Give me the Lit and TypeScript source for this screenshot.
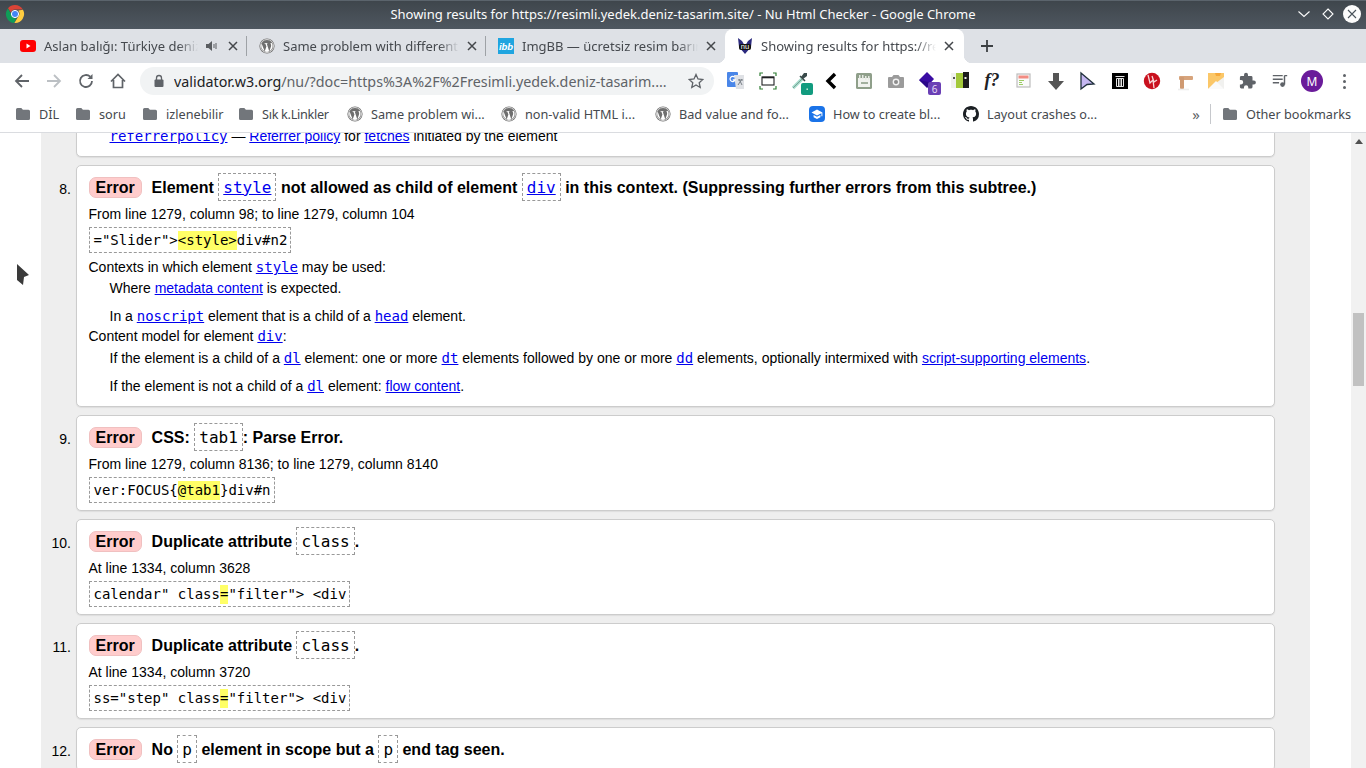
import { LitElement, html, css, svg } from 'lit';
import { customElement } from 'lit/decorators.js';

const folder = html`<svg class="ico" viewBox="0 0 16 16"><path fill="#72767b" d="M1 3.5A1.5 1.5 0 0 1 2.5 2h3.8l1.6 1.8h5.6A1.5 1.5 0 0 1 15 5.3v7.2a1.5 1.5 0 0 1-1.5 1.5h-11A1.5 1.5 0 0 1 1 12.5z"/></svg>`;

const wp = html`<svg class="ico" viewBox="0 0 16 16"><circle cx="8" cy="8" r="7.6" fill="#6f6f6f"/><circle cx="8" cy="8" r="6.5" fill="none" stroke="#fff" stroke-width=".7"/><path fill="#fff" d="M2.6 5.6 5.7 13.6 7.4 8.6 6.3 5.6H5.4V4.9H8.6V5.6H7.7L10.3 13.4 12 8.4C12.4 7 12 6 11.3 5.2L12.8 5A6 6 0 0 1 13.6 8 5.8 5.8 0 0 1 8 13.9 6 6 0 0 1 2.2 8C2.2 7.1 2.3 6.4 2.6 5.6Z"/></svg>`;

const github = html`<svg class="ico" viewBox="0 0 16 16"><path fill="#1b1f23" d="M8 0C3.58 0 0 3.58 0 8c0 3.54 2.29 6.53 5.47 7.59.4.07.55-.17.55-.38 0-.19-.01-.82-.01-1.49-2.01.37-2.53-.49-2.69-.94-.09-.23-.48-.94-.82-1.13-.28-.15-.68-.52-.01-.53.63-.01 1.08.58 1.23.82.72 1.21 1.87.87 2.33.66.07-.52.28-.87.51-1.07-1.78-.2-3.64-.89-3.64-3.95 0-.87.31-1.59.82-2.15-.08-.2-.36-1.02.08-2.12 0 0 .67-.21 2.2.82.64-.18 1.32-.27 2-.27s1.36.09 2 .27c1.53-1.04 2.2-.82 2.2-.82.44 1.1.16 1.92.08 2.12.51.56.82 1.27.82 2.15 0 3.07-1.87 3.75-3.65 3.95.29.25.54.73.54 1.48 0 1.07-.01 1.93-.01 2.2 0 .21.15.46.55.38A8.01 8.01 0 0 0 16 8c0-4.42-3.58-8-8-8z"/></svg>`;

const cap = html`<svg class="ico" viewBox="0 0 16 16"><rect width="16" height="16" rx="4" fill="#1a73e8"/><path fill="#fff" d="M8 3.6 2.5 6.6 8 9.6l4.4-2.4v3h1V6.6zM4.6 9v2.2L8 13l3.4-1.8V9L8 10.8z"/></svg>`;

const closeX = html`<svg class="x" viewBox="0 0 10 10"><path d="M1 1l8 8M9 1l-8 8" stroke="#44474b" stroke-width="1.5" fill="none"/></svg>`;

// toolbar extension icons, left to right
const ext = [
  svg`<rect x="1" y="1" width="11" height="15" rx="1" fill="#4a86e8"/><path d="M8 4h10v14H10z" fill="#dfe1e5"/><path d="M13 8l3 6M16 8l-4 6M12 9h5" stroke="#7a8087" stroke-width="1" fill="none"/><path d="M8.6 6.2a2.6 2.6 0 1 0 .5 2.6H6.7" stroke="#fff" stroke-width="1.2" fill="none"/>`,
  svg`<path d="M2 5V2h3M15 2h3v3M2 15v3h3M18 15v3h-3" stroke="#2e7d32" stroke-width="1.2" fill="none"/><rect x="4" y="6" width="12" height="8" fill="none" stroke="#202124" stroke-width="1.1"/><path d="M4 6.500h12" stroke="#202124" stroke-width="1.600"/>`,
  svg`<path d="M3 17 12 8" stroke="#a5dccb" stroke-width="3.200"/><path d="M3 17 12 8" stroke="#6f8f88" stroke-width=".8"/><path d="M11 6l3-4h3v3l-4 3z" fill="#394a4a"/><path d="M10 5l5 5" stroke="#394a4a" stroke-width="1.600"/><rect x="11" y="12" width="12" height="12" rx="2" fill="#129b7f"/><rect x="16.500" y="17.500" width="1.400" height="1.400" fill="#e8f5e9"/>`,
  svg`<path d="M13 3 6 10l7 7" fill="none" stroke="#000" stroke-width="3.4"/>`,
  svg`<rect x="2" y="2" width="16" height="16" rx="1.5" fill="#8f9f8a"/><rect x="4" y="7" width="12" height="9" fill="#f0f2ee"/><path d="M5 4h1.5v4H5zM8 4h1.5v4H8zM11 5h1.5v4H11zM14 5h1.5v4H14z" fill="#e6e9e3"/><path d="M7 12h7" stroke="#8f9f8a" stroke-width="1.6"/>`,
  svg`<path d="M3 6h3l1.5-2h5L14 6h3a1 1 0 0 1 1 1v9a1 1 0 0 1-1 1H3a1 1 0 0 1-1-1V7a1 1 0 0 1 1-1z" fill="#9b9b9b"/><circle cx="10" cy="11" r="3.4" fill="#f2f2f2"/><circle cx="10" cy="11" r="2" fill="#8c8c8c"/>`,
  svg`<path d="M1 9 9 1l7 7-7 8z" fill="#3a0ca3"/><path d="M1 9l8 8 6-5" fill="#2b078a"/><rect x="10" y="11" width="13" height="13" rx="2" fill="#6a3fb5"/><text x="16.5" y="21.5" text-anchor="middle" font-family="Noto Sans" font-size="10" fill="#e6dcf5">6</text>`,
  svg`<rect x="1" y="2" width="5" height="15" fill="#f1f1ee"/><rect x="6" y="2" width="9" height="15" fill="#a3c93a"/><rect x="13" y="1" width="6" height="16" fill="#1c1c1c"/><rect x="3" y="6" width="2" height="2" fill="#555"/><rect x="14.5" y="6" width="2" height="2" fill="#eee"/>`,
  svg`<text x="10" y="15" text-anchor="middle" font-family="Liberation Serif" font-style="italic" font-weight="700" font-size="18" fill="#202124">f?</text>`,
  svg`<rect x="3" y="3" width="13" height="13" fill="#fafafa" stroke="#bdbdbd" stroke-width="1.2"/><rect x="4.500" y="4.500" width="10" height="3" fill="#f28b82"/><path d="M5 9.500h5M5 11.500h3M5 13.500h4" stroke="#9ccc65" stroke-width="1.200"/>`,
  svg`<path d="M7 2h6v8h5l-8 9-8-9h5z" fill="#555"/>`,
  svg`<path d="M3 2 16 13 9 13.500 3 18z" fill="#c5b7f1" stroke="#20303c" stroke-width="1.300" stroke-linejoin="miter"/>`,
  svg`<rect x="2" y="2" width="16" height="16" fill="#000"/><path d="M5.500 5.500h9M6.500 7.500h7v8h-7zM8.500 8v7M10 8v7M11.500 8v7" fill="none" stroke="#e6e6e6" stroke-width="1"/>`,
  svg`<circle cx="10" cy="10" r="8.2" fill="#c9111e"/><path d="M6 4l2 8 3-3 1 8M10 5l2 6 3-2" fill="none" stroke="#f7d7d9" stroke-width="1.3"/>`,
  svg`<rect x="5" y="5" width="14" height="4" rx="1" fill="#d7a47c"/><rect x="6" y="6" width="4" height="12" rx="1" fill="#cf9a72"/><path d="M4 18.500h11" stroke="#eee" stroke-width="1.600"/>`,
  svg`<rect x="2" y="2" width="16" height="16" fill="#fbc768"/><path d="M2 18 18 6v12z" fill="#f1f1ef"/><path d="M2 18 10 10 18 18z" fill="#fafafa"/><path d="M9 2l1 3h4l1-3" fill="#f6a93b"/>`,
];

const puzzle = html`<svg class="tb" viewBox="0 0 20 20"><path fill="#5f6368" d="M16.5 9.5H15V6a1.5 1.5 0 0 0-1.5-1.5H10V3a2.2 2.2 0 0 0-4.4 0v1.5H2.5A1.5 1.5 0 0 0 1 6v3h1.3a2.4 2.4 0 0 1 0 4.8H1v3A1.5 1.5 0 0 0 2.5 18.3h3V17a2.4 2.4 0 0 1 4.8 0v1.3h3.2a1.5 1.5 0 0 0 1.5-1.5V14h1.5a2.2 2.2 0 0 0 0-4.5z"/></svg>`;
const media = html`<svg class="tb" viewBox="0 0 20 20"><path d="M2 4h11M2 8h11M2 12h7" stroke="#5f6368" stroke-width="1.6" fill="none"/><path d="M15 4h3M15 4v10" stroke="#5f6368" stroke-width="1.6" fill="none"/><circle cx="12.8" cy="14" r="2.6" fill="#5f6368"/></svg>`;

@customElement('app-root')
export class AppRoot extends LitElement {
  static styles = css`
    :host {
      display: block;
      width: 1366px;
      height: 768px;
      overflow: hidden;
      position: relative;
      font-family: 'Noto Sans', sans-serif;
      background: #fff;
    }
    .win { display: flex; flex-direction: column; height: 768px; }

    /* title bar */
    .titlebar {
      height: 29px;
      flex: none;
      display: grid;
      grid-template-columns: 1fr auto 1fr;
      align-items: center;
      background: linear-gradient(#3f464c, #4e5760);
      border-top: 1px solid #5b646c;
      box-sizing: border-box;
      color: #fcfcfc;
      font-size: 13px;
      padding: 0 5px 2px;
    }
    .winbtns { display: flex; justify-content: flex-end; align-items: center; gap: 6px; }
    .winbtns svg { width: 18px; height: 18px; display: block; }

    /* tabs */
    .tabstrip {
      height: 34px;
      flex: none;
      display: flex;
      background: #dee1e6;
      padding-left: 8px;
      font-size: 13px;
      color: #45494e;
    }
    .tab {
      width: 239px;
      flex: none;
      box-sizing: border-box;
      display: flex;
      align-items: center;
      padding: 0 9px 0 12px;
      gap: 8px;
      position: relative;
    }
    .tab::after {
      content: '';
      position: absolute;
      right: 0;
      top: 7px;
      height: 20px;
      width: 1px;
      background: #9ea2a6;
    }
    .tab.nosep::after { display: none; }
    .tab.active {
      background: #fff;
      border-radius: 8px 8px 0 0;
      padding-right: 10px;
    }
    .tab.active::after {
      display: block;
      right: -8px;
      top: auto;
      bottom: 0;
      width: 8px;
      height: 8px;
      background: radial-gradient(circle at 100% 0, transparent 8px, #fff 8.5px);
    }
    .tab.active::before {
      content: '';
      position: absolute;
      left: -8px;
      bottom: 0;
      width: 8px;
      height: 8px;
      background: radial-gradient(circle at 0 0, transparent 8px, #fff 8.5px);
    }
    .tab .fav { width: 16px; height: 16px; flex: none; display: block; }
    .tab .label {
      flex: 1;
      white-space: nowrap;
      overflow: hidden;
      -webkit-mask-image: linear-gradient(90deg, #000 calc(100% - 20px), transparent);
      mask-image: linear-gradient(90deg, #000 calc(100% - 20px), transparent);
    }
    .x { width: 10px; height: 10px; flex: none; }
    .spk { width: 12px; height: 12px; flex: none; margin-right: 2px; }
    .plus { width: 44px; margin-left: 1px; display: flex; align-items: center; justify-content: center; }
    .plus svg { width: 14px; height: 14px; }

    /* toolbar */
    .toolbar {
      height: 36px;
      flex: none;
      display: flex;
      align-items: center;
      padding-left: 6px;
      box-sizing: border-box;
    }
    .nav { width: 32px; display: flex; justify-content: center; }
    .nav svg { width: 18px; height: 18px; display: block; }
    .omni {
      width: 574px;
      height: 28px;
      margin-left: 6px;
      margin-right: 6px;
      flex: none;
      box-sizing: border-box;
      border-radius: 14px;
      background: #f1f3f4;
      display: flex;
      align-items: center;
      padding: 0 10px 0 13px;
      font-size: 14.3px;
      color: #5f6368;
      white-space: nowrap;
    }
    .omni .host { color: #202124; }
    .omni .url { flex: 1; margin-left: 9px; overflow: hidden; }
    .omni svg { flex: none; display: block; }
    .slot { width: 32px; flex: none; display: flex; justify-content: center; align-items: center; }
    .slot svg.e { width: 20px; height: 20px; overflow: visible; display: block; }
    .tb { width: 18px; height: 18px; display: block; }
    .avatar {
      width: 22px;
      height: 22px;
      border-radius: 50%;
      background: #6a1b9a;
      color: #fff;
      font-size: 12px;
      display: flex;
      align-items: center;
      justify-content: center;
    }
    .dots { display: flex; flex-direction: column; gap: 3px; }
    .dots i { width: 3px; height: 3px; border-radius: 50%; background: #5f6368; display: block; }

    /* bookmarks */
    .bookmarks {
      height: 34px;
      flex: none;
      box-sizing: border-box;
      border-bottom: 1px solid #dadce0;
      display: flex;
      align-items: center;
      padding: 0 15px 3px 15px;
      font-size: 12.7px;
      color: #45494e;
    }
    .bm { display: flex; align-items: center; gap: 8px; white-space: nowrap; flex: none; }
    .bm.site { width: 154px; }
    .tight { letter-spacing: -0.3px; }
    .ico { width: 16px; height: 16px; flex: none; display: block; }
    .spacer { flex: 1; }
    .more { color: #5f6368; font-size: 15px; margin-right: 10px; }
    .bsep { width: 1px; height: 20px; background: #c6c8cc; margin-right: 11px; }

    /* page */
    .page { flex: 1; min-height: 0; display: flex; overflow: hidden; }
    .col {
      flex: 1;
      margin: 0 41px;
      background: #eee;
      padding-right: 35px;
      font: 14px/20px 'Liberation Sans', Arial, sans-serif;
      color: #000;
    }
    .scrollbar { width: 15px; flex: none; background: #f1f1f1; position: relative; }
    .arrow {
      position: absolute; left: 4px; top: 6px;
      width: 0; height: 0;
      border-left: 4px solid transparent;
      border-right: 4px solid transparent;
      border-bottom: 5px solid #505050;
    }
    .thumb { position: absolute; left: 2px; top: 180px; width: 11px; height: 73px; background: #c1c1c1; }

    .item { display: flex; margin-bottom: 8px; }
    .item.first { margin-top: -8px; }
    .num { width: 30px; flex: none; text-align: right; padding-top: 14px; color: #000; }
    .card {
      flex: 1;
      margin-left: 5px;
      box-sizing: border-box;
      background: #fff;
      border: 1px solid #ccc;
      border-radius: 5px;
      box-shadow: 0 1px 1px #ddd;
      padding: 7px 12px 7px 11.5px;
    }
    .first .card { padding: 0 12px 10px 11.5px; }
    .head {
      font-size: 16px;
      font-weight: 700;
      line-height: 30px;
      white-space: nowrap;
      height: 28px;
    }
    .pill {
      display: inline-block;
      background: #fcc;
      border: 1px solid #f0c0c0;
      border-radius: 7px;
      padding: 0 6px;
      line-height: 19px;
      margin-right: 5.5px;
    }
    .head code {
      font: 400 16px/27px 'DejaVu Sans Mono', monospace;
      height: 26px;
      display: inline-block;
      border: 1px dashed #999;
      padding: 0 4px;
      vertical-align: top;
    }
    a { color: #00e; text-decoration: underline; }
    code { font-family: 'DejaVu Sans Mono', monospace; line-height: 0; }
    .loc { margin-top: 3px; }
    .ext {
      display: table;
      margin-top: 3px;
      border: 1px dashed #999;
      padding: 0 3px 0 4px;
      font: 14px/24px 'DejaVu Sans Mono', monospace;
      white-space: pre;
    }
    .ext b { font-weight: 400; background: #ff6; display: inline-block; line-height: 19px; }
    dl { margin: 4px 0 3px; }
    dd { margin: 1px 0 0 21px; }
    dd + dd { margin-top: 8px; }
    dd.tall { margin-top: 2px; }
    dt code, dd code { font-size: 14px; }
    .cursor { position: absolute; left: 17px; top: 264px; width: 12px; height: 21px; }
  `;

  private tab(fav: unknown, label: string, extra: unknown = '', cls = '') {
    return html`<div class="tab ${cls}">${fav}<span class="label">${label}</span>${extra}${closeX}</div>`;
  }

  private errorItem(n: number, head: unknown, loc?: string, ext?: unknown, more: unknown = '') {
    return html`<div class="item">
      <div class="num">${n}.</div>
      <div class="card">
        <div class="head"><span class="pill">Error</span> ${head}</div>
        ${loc ? html`<div class="loc">${loc}</div><div class="ext">${ext}</div>` : ''}
        ${more}
      </div>
    </div>`;
  }

  render() {
    const yt = html`<svg class="fav" viewBox="0 0 16 16"><rect y="2" width="16" height="12" rx="3" fill="#f00"/><path d="M6.5 5.5v5l4-2.5z" fill="#fff"/></svg>`;
    const ibb = html`<svg class="fav" viewBox="0 0 16 16"><rect width="16" height="16" fill="#1fa5e0"/><text x="8" y="11.5" text-anchor="middle" font-family="Liberation Sans" font-style="italic" font-weight="700" font-size="9.5" fill="#fff">ibb</text></svg>`;
    const nu = html`<svg class="fav" viewBox="0 0 16 16"><path d="M1 0 5 3 8 8 11 3 15 0 14 9 8 16 2 9z" fill="#2c2a7e"/><rect x="2" y="6" width="12" height="6" rx="2" fill="#111"/><text x="8" y="11" text-anchor="middle" font-family="Liberation Sans" font-size="7.500" fill="#fff">nu</text></svg>`;
    const spk = html`<svg class="spk" viewBox="0 0 12 12"><path d="M0 4h2.5L6 1v10L2.5 8H0z" fill="#5a5d61"/><path d="M8 4v4M10 3v6" stroke="#5a5d61" stroke-width="1"/></svg>`;
    // folder bookmark slot widths, measured from the bar
    const folders: [string, number, string?][] = [
      ['DİL', 60],
      ['soru', 67],
      ['izlenebilir', 96],
      ['Sık k.Linkler', 109, 'tight'],
    ];

    return html`
      <div class="win">
        <div class="titlebar">
          <svg width="20" height="20" viewBox="0 0 20 20">
            <path d="M10 1a9 9 0 0 1 7.8 4.5H10a4.5 4.5 0 0 0-4.2 3L3 4.2A9 9 0 0 1 10 1z" fill="#db4437"/>
            <path d="M2.9 4.4 7 11.6a4.5 4.5 0 0 0 4.5 2.8L9 19A9 9 0 0 1 2.9 4.4z" fill="#0f9d58"/>
            <path d="M18 5.8A9 9 0 0 1 9.4 19l4.2-7a4.5 4.5 0 0 0-.3-5.5z" fill="#ffcd40"/>
            <circle cx="10" cy="10" r="3.6" fill="#4285f4" stroke="#fff" stroke-width="1"/>
          </svg>
          <span>Showing results for https://resimli.yedek.deniz-tasarim.site/ - Nu Html Checker - Google Chrome</span>
          <div class="winbtns">
            <svg viewBox="0 0 18 18"><path d="M3.5 6.5 9 11.5l5.500-5" stroke="#fcfcfc" stroke-width="1.1" fill="none"/></svg>
            <svg viewBox="0 0 18 18"><path d="M9 4l5 5-5 5-5-5z" stroke="#fcfcfc" stroke-width="1.1" fill="none"/></svg>
            <svg viewBox="0 0 18 18"><circle cx="9" cy="9" r="9" fill="#fcfcfc"/><path d="M5 5l8 8M13 5l-8 8" stroke="#4a535b" stroke-width="1.1"/></svg>
          </div>
        </div>

        <div class="tabstrip">
          ${this.tab(yt, 'Aslan balığı: Türkiye deniz', spk)}
          ${this.tab(html`<span class="fav">${wp}</span>`, 'Same problem with different')}
          ${this.tab(ibb, 'ImgBB — ücretsiz resim barın', '', 'nosep')}
          ${this.tab(nu, 'Showing results for https://re', '', 'active')}
          <div class="plus"><svg viewBox="0 0 14 14"><path d="M7 1v12M1 7h12" stroke="#3c4043" stroke-width="1.8"/></svg></div>
        </div>

        <div class="toolbar">
          <div class="nav"><svg viewBox="0 0 18 18"><path d="M16 9H3M9 3 3 9l6 6" stroke="#5f6368" stroke-width="1.8" fill="none"/></svg></div>
          <div class="nav"><svg viewBox="0 0 18 18"><path d="M2 9h13M9 3l6 6-6 6" stroke="#bcc0c4" stroke-width="1.8" fill="none"/></svg></div>
          <div class="nav"><svg viewBox="0 0 18 18"><path d="M15 9a6 6 0 1 1-1.800-4.300" stroke="#5f6368" stroke-width="1.800" fill="none"/><path d="M15.500 2v5h-5z" fill="#5f6368"/></svg></div>
          <div class="nav"><svg viewBox="0 0 18 18"><path d="M2 9.500 9 2.500l7 7M4.500 8v7.500h9V8" stroke="#5f6368" stroke-width="1.700" fill="none"/></svg></div>
          <div class="omni">
            <svg width="12" height="14" viewBox="0 0 12 14"><path d="M3.500 6V4a2.500 2.500 0 0 1 5 0v2" fill="none" stroke="#5f6368" stroke-width="1.300"/><rect x="1.500" y="5.500" width="9" height="7.500" rx="1" fill="#5f6368"/></svg>
            <span class="url"><span class="host">validator.w3.org</span>/nu/?doc=https%3A%2F%2Fresimli.yedek.deniz-tasarim....</span>
            <svg width="16" height="16" viewBox="0 0 16 16"><path d="M8 1.500l2 4.500 4.800.500-3.600 3.200 1 4.800L8 12l-4.200 2.500 1-4.800L1.200 6.500 6 6z" fill="none" stroke="#5f6368" stroke-width="1.300"/></svg>
          </div>
          ${ext.map((e) => html`<div class="slot"><svg class="e" viewBox="0 0 20 20">${e}</svg></div>`)}
          <div class="slot">${puzzle}</div>
          <div class="slot">${media}</div>
          <div class="slot"><div class="avatar">M</div></div>
          <div class="slot"><div class="dots"><i></i><i></i><i></i></div></div>
        </div>

        <div class="bookmarks">
          ${folders.map(([t, w, c]) => html`<div class="bm ${c ?? ''}" style="width:${w}px">${folder}${t}</div>`)}
          <div class="bm site">${wp}Same problem wi...</div>
          <div class="bm site">${wp}non-valid HTML i...</div>
          <div class="bm site">${wp}Bad value and fo...</div>
          <div class="bm site">${cap}How to create bl...</div>
          <div class="bm site">${github}Layout crashes o...</div>
          <div class="spacer"></div>
          <div class="more">»</div>
          <div class="bsep"></div>
          <div class="bm">${folder}Other bookmarks</div>
        </div>

        <div class="page">
          <div class="col">
            <div class="item first">
              <div class="num"></div>
              <div class="card">
                <dl style="margin:0"><dd style="margin-top:0"><a href="#"><code>referrerpolicy</code></a> — <a href="#">Referrer policy</a> for <a href="#">fetches</a> initiated by the element</dd></dl>
              </div>
            </div>

            ${this.errorItem(
              8,
              html`Element <code><a href="#">style</a></code> not allowed as child of element <code><a href="#">div</a></code> in this context. (Suppressing further errors from this subtree.)`,
              'From line 1279, column 98; to line 1279, column 104',
              html`="Slider"><b>&lt;style&gt;</b>div#n2`,
              html`<dl>
                <dt>Contexts in which element <a href="#"><code>style</code></a> may be used:</dt>
                <dd>Where <a href="#">metadata content</a> is expected.</dd>
                <dd>In a <a href="#"><code>noscript</code></a> element that is a child of a <a href="#"><code>head</code></a> element.</dd>
                <dt>Content model for element <a href="#"><code>div</code></a>:</dt>
                <dd class="tall">If the element is a child of a <a href="#"><code>dl</code></a> element: one or more <a href="#"><code>dt</code></a> elements followed by one or more <a href="#"><code>dd</code></a> elements, optionally intermixed with <a href="#">script-supporting elements</a>.</dd>
                <dd>If the element is not a child of a <a href="#"><code>dl</code></a> element: <a href="#">flow content</a>.</dd>
              </dl>`
            )}
            ${this.errorItem(
              9,
              html`CSS: <code>tab1</code>: Parse Error.`,
              'From line 1279, column 8136; to line 1279, column 8140',
              html`ver:FOCUS{<b>@tab1</b>}div#n`
            )}
            ${this.errorItem(
              10,
              html`Duplicate attribute <code>class</code>.`,
              'At line 1334, column 3628',
              html`calendar" class<b>=</b>"filter"> &lt;div`
            )}
            ${this.errorItem(
              11,
              html`Duplicate attribute <code>class</code>.`,
              'At line 1334, column 3720',
              html`ss="step" class<b>=</b>"filter"> &lt;div`
            )}
            ${this.errorItem(12, html`No <code>p</code> element in scope but a <code>p</code> end tag seen.`)}
          </div>
          <div class="scrollbar"><div class="arrow"></div><div class="thumb"></div></div>
        </div>
      </div>
      <svg class="cursor" viewBox="0 0 12 21"><path d="M0 0 12 11 7 13 6 21 0 16z" fill="#3a3a3a"/></svg>
    `;
  }
}
